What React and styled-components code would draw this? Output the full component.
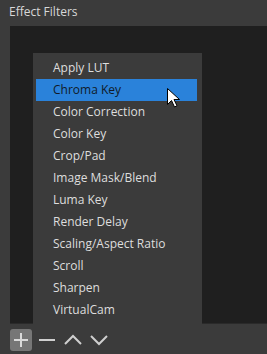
import styled, { createGlobalStyle } from "styled-components";

const items = [
  "Apply LUT",
  "Chroma Key",
  "Color Correction",
  "Color Key",
  "Crop/Pad",
  "Image Mask/Blend",
  "Luma Key",
  "Render Delay",
  "Scaling/Aspect Ratio",
  "Scroll",
  "Sharpen",
  "VirtualCam",
];

const Global = createGlobalStyle`
  html, body {
    margin: 0;
    background: #3b3b3b;
  }
  body {
    font-family: "Open Sans", "Noto Sans", sans-serif;
  }
`;

function App() {
  return (
    <Window>
      <Global />
      <Title>Effect Filters</Title>
      <Panel />
      <Toolbar>
        <ToolButton active>
          <svg width="16" height="16" viewBox="0 0 16 16">
            <path d="M8 1v14M1 8h14" stroke="#dadada" strokeWidth="2" />
          </svg>
        </ToolButton>
        <ToolButton>
          <svg width="16" height="16" viewBox="0 0 16 16">
            <path d="M0 8h16" stroke="#cfcfcf" strokeWidth="2" />
          </svg>
        </ToolButton>
        <ToolButton>
          <svg width="18" height="16" viewBox="0 0 18 16">
            <path d="M1 12l8-8 8 8" fill="none" stroke="#cfcfcf" strokeWidth="2" />
          </svg>
        </ToolButton>
        <ToolButton>
          <svg width="18" height="16" viewBox="0 0 18 16">
            <path d="M1 4l8 8 8-8" fill="none" stroke="#cfcfcf" strokeWidth="2" />
          </svg>
        </ToolButton>
      </Toolbar>
      <Menu>
        {items.map((item) => (
          <MenuItem key={item} selected={item === "Chroma Key"}>
            {item}
          </MenuItem>
        ))}
      </Menu>
      <Cursor width="13" height="20" viewBox="0 0 13 20">
        <path
          d="M0.5 0.5v16l4-4 3 6.5 2.5-1.2-3-6.3h5.5z"
          fill="#ffffff"
          stroke="#000000"
          strokeWidth="1"
          strokeLinejoin="round"
        />
      </Cursor>
    </Window>
  );
}

export default App;

const Window = styled.div`
  position: relative;
  width: 267px;
  height: 354px;
  display: flex;
  flex-direction: column;
  overflow: hidden;
`;

const Title = styled.div`
  height: 26px;
  padding-left: 9px;
  line-height: 24px;
  font-size: 12px;
  color: #d8d8d8;
`;

const Panel = styled.div`
  margin-left: 10px;
  height: 297px;
  background: #1f1f1f;
  border-bottom: 1px solid #2a2a2a;
`;

const Toolbar = styled.div`
  display: flex;
  align-items: center;
  gap: 4px;
  padding: 5px 0 0 10px;
`;

const ToolButton = styled.div`
  width: 22px;
  height: 22px;
  display: flex;
  align-items: center;
  justify-content: center;
  border-radius: 3px;
  background: ${(props) => (props.active ? "#767676" : "transparent")};
`;

const Menu = styled.div`
  position: absolute;
  left: 33px;
  top: 53px;
  width: 169px;
  height: 271px;
  box-sizing: border-box;
  padding: 4px 5px 0 3px;
  background: #3b3b3b;
`;

const MenuItem = styled.div`
  height: 22px;
  line-height: 22px;
  padding-left: 17px;
  font-size: 12px;
  color: ${(props) => (props.selected ? "#111a28" : "#dedede")};
  background: ${(props) => (props.selected ? "#2a82da" : "transparent")};
  white-space: nowrap;
`;

const Cursor = styled.svg`
  position: absolute;
  left: 167px;
  top: 88px;
`;
